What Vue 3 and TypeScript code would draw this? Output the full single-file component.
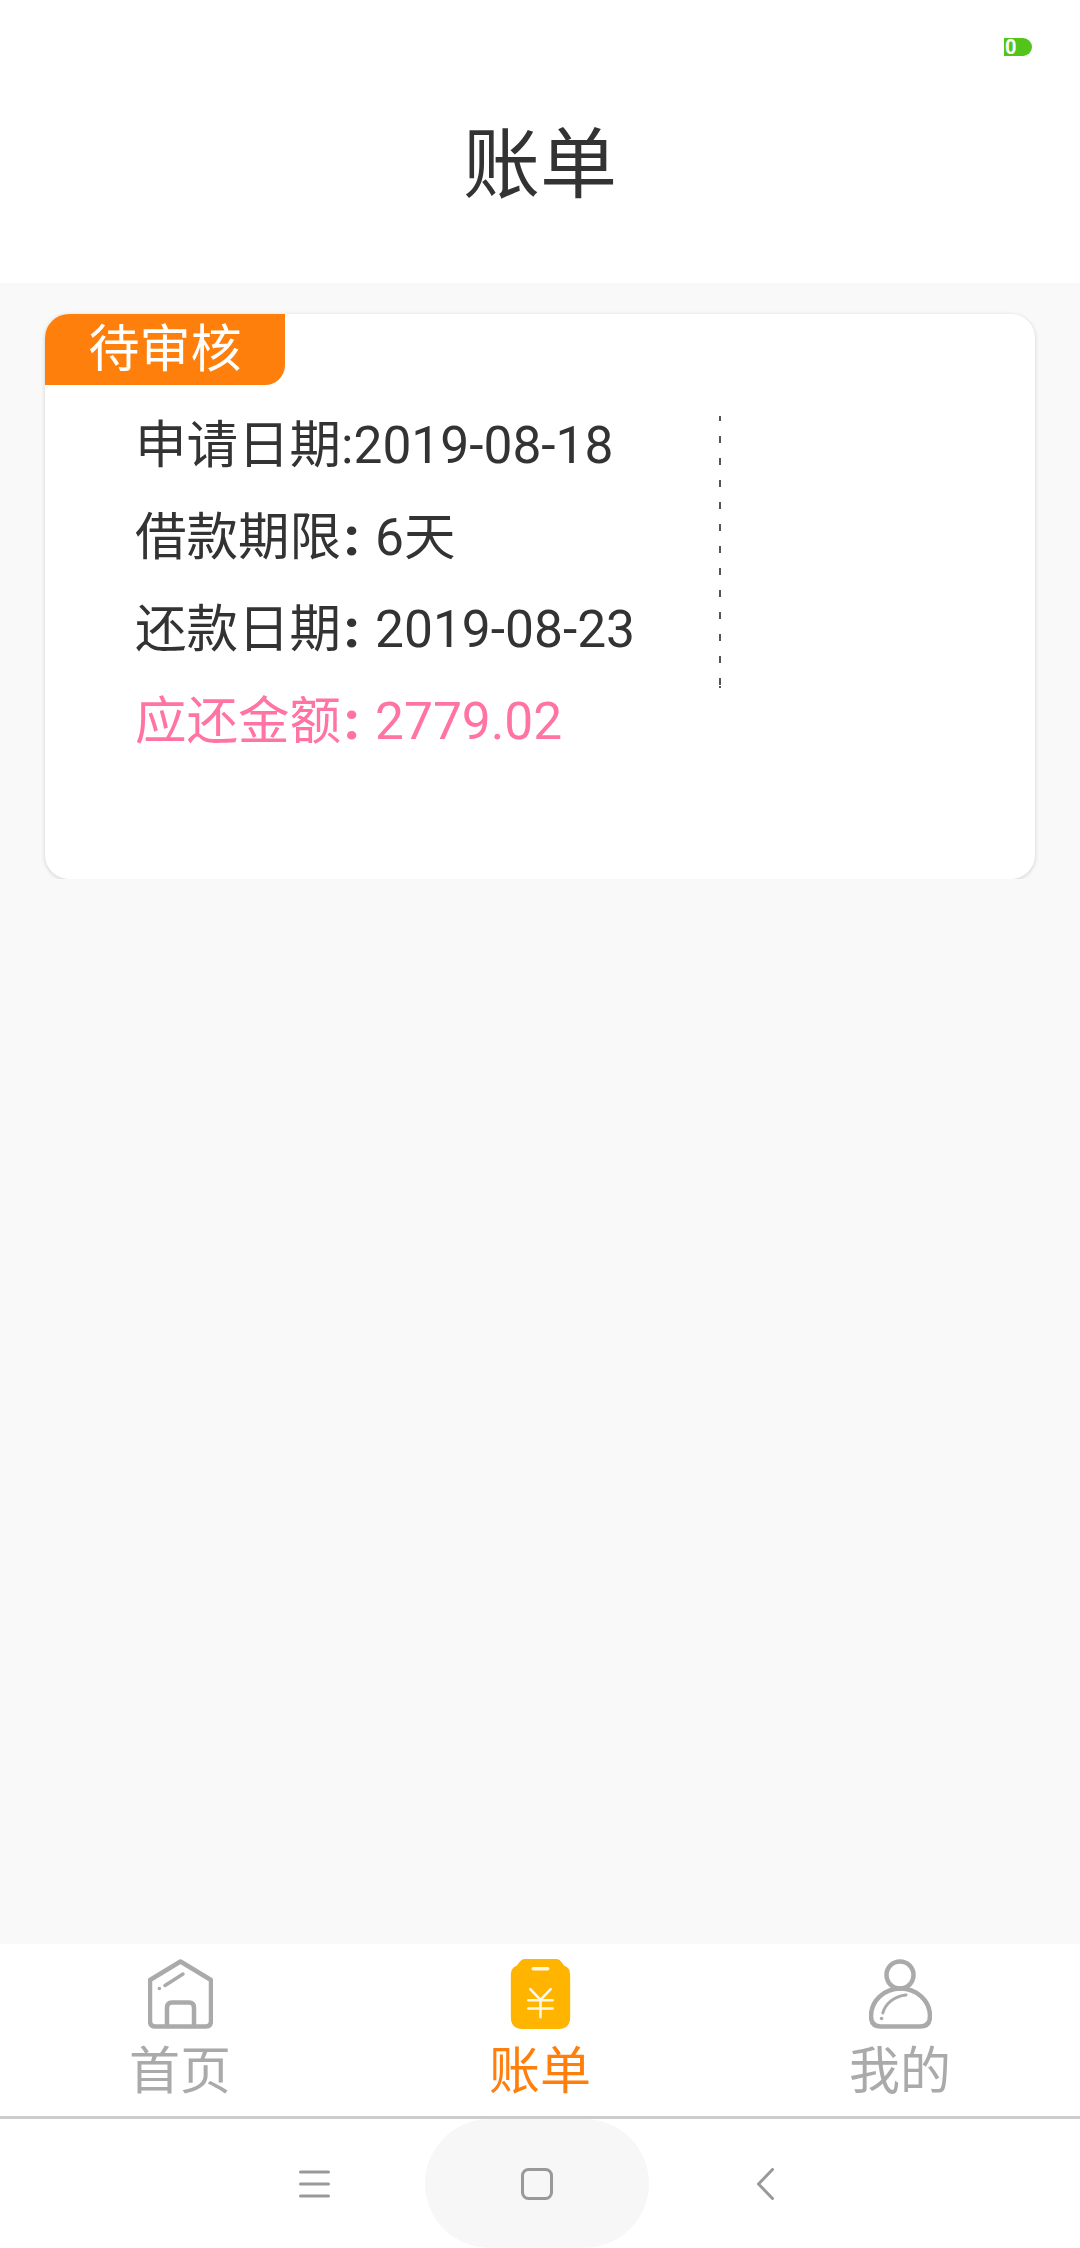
<script setup lang="ts">
interface Tab { label: string; active: boolean; kind: string }
const tabs: Tab[] = [
  { label: '首页', active: false, kind: 'home' },
  { label: '账单', active: true, kind: 'bill' },
  { label: '我的', active: false, kind: 'me' },
]
</script>

<template>
  <div class="phone">
    <header class="header">
      <div class="status">
        <div class="battery"><span class="battery-num">0</span></div>
      </div>
      <h1 class="title">账单</h1>
    </header>

    <main class="content">
      <section class="card">
        <div class="tag">待审核</div>
        <div class="body">
          <div class="info">
            <p class="row">申请日期:2019-08-18</p>
            <p class="row">借款期限<span class="colon">:</span>6天</p>
            <p class="row">还款日期<span class="colon">:</span>2019-08-23</p>
            <p class="row pink">应还金额<span class="colon">:</span>2779.02</p>
          </div>
          <div class="divider"></div>
        </div>
      </section>
    </main>

    <nav class="tabbar">
      <div v-for="t in tabs" :key="t.kind" class="tab" :class="{ active: t.active }">
        <svg v-if="t.kind === 'home'" class="tab-icon" width="65" height="70" viewBox="0 0 65 70" fill="none" stroke="#aaa" stroke-width="4.500" stroke-linecap="round" stroke-linejoin="round">
          <path d="M32.500 2.500 L63 21 V62 Q63 67.500 57.500 67.500 H7.500 Q2 67.500 2 62 V21 Z" />
          <path d="M19 67 V49 Q19 43.500 24 43.500 H41 Q46 43.500 46 49 V67" />
          <path d="M17 26.500 L35 15" stroke-width="3.500" />
          <path d="M11.300 29.500 L11.400 29.500" stroke-width="3.500" />
        </svg>
        <svg v-else-if="t.kind === 'bill'" class="tab-icon" width="61" height="72" viewBox="0 0 61 72">
          <path d="M14 0 H47 Q50 0 52 3 L55 7 Q61 9 61 16 V60 Q61 72 49 72 H12 Q0 72 0 60 V16 Q0 9 6 7 L9 3 Q11 0 14 0 Z" fill="#ffb400" />
          <g fill="none" stroke="#fff" stroke-width="2.600" stroke-linecap="round" opacity="0.9">
            <path d="M23 10 H38" stroke-width="3.500" />
            <path d="M20 31 L30.500 42 L41 31" />
            <path d="M18 42.500 H43" />
            <path d="M18 51 H43" />
            <path d="M30.500 42 V60" />
          </g>
        </svg>
        <svg v-else class="tab-icon" width="63" height="70" viewBox="0 0 63 70" fill="none" stroke="#aaa" stroke-width="4.500" stroke-linecap="round">
          <circle cx="31" cy="16" r="13.500" />
          <path d="M12 67.500 H51 Q61 67.500 61 57 C61 42 48 29.500 31.500 29.500 C15 29.500 2 42 2 57 Q2 67.500 12 67.500 Z" />
          <path d="M37 36 C26 37 16.500 44 13.800 54" stroke-width="3" />
          <path d="M12.500 59.500 L12.600 59.500" stroke-width="3.500" />
        </svg>
        <span class="tab-label">{{ t.label }}</span>
      </div>
    </nav>

    <footer class="sysnav">
      <svg class="sys-icon" width="31" height="28" viewBox="0 0 31 28" stroke="#999" stroke-width="3" stroke-linecap="round">
        <path d="M1.500 2 H29.500 M1.500 14 H29.500 M1.500 26 H29.500" />
      </svg>
      <div class="pill">
        <svg width="32" height="32" viewBox="0 0 32 32" fill="none" stroke="#999" stroke-width="3">
          <rect x="1.500" y="1.500" width="29" height="29" rx="6" />
        </svg>
      </div>
      <svg class="sys-icon" width="17" height="32" viewBox="0 0 17 32" fill="none" stroke="#999" stroke-width="3" stroke-linecap="round" stroke-linejoin="round">
        <path d="M15.500 1.500 L1.500 16 L15.500 30.500" />
      </svg>
    </footer>
  </div>
</template>

<style>
html, body { margin: 0; padding: 0; background: #fff; }
</style>

<style scoped>
.phone {
  width: 1080px;
  height: 2248px;
  display: flex;
  flex-direction: column;
  background: #f9f9f9;
  font-family: Roboto, "Noto Sans CJK SC", "Noto Sans", sans-serif;
  overflow: hidden;
}
.header {
  height: 283px;
  background: #fff;
  display: flex;
  flex-direction: column;
  flex: none;
}
.status {
  height: 130px;
  padding: 38px 48px 0 0;
  box-sizing: border-box;
  display: flex;
  justify-content: flex-end;
}
.battery {
  width: 28px;
  height: 18px;
  background: #52c41a;
  border-radius: 0 9px 9px 0;
  display: flex;
  align-items: center;
  padding-left: 1px;
  box-sizing: border-box;
}
.battery-num {
  color: #fff;
  font-size: 20px;
  font-weight: 700;
  line-height: 18px;
}
.title {
  margin: 0;
  text-align: center;
  font-size: 77px;
  font-weight: 400;
  line-height: 72px;
  color: #333;
}
.content {
  flex: 1;
  padding: 31px 45px 0;
  min-height: 0;
}
.card {
  height: 565px;
  background: #fff;
  border-radius: 24px;
  box-shadow: 0 1px 4px rgba(0, 0, 0, 0.17);
  clip-path: inset(-8px -8px 0 -8px);
}
.tag {
  width: 240px;
  height: 71px;
  background: #ff7f0c;
  color: #fff;
  font-size: 51px;
  line-height: 71px;
  text-align: center;
  border-radius: 24px 0 20px 0;
}
.body {
  display: flex;
  padding: 15px 0 0 90px;
}
.info {
  width: 584px;
  flex: none;
}
.row {
  margin: 0;
  font-size: 51.500px;
  line-height: 92px;
  color: #333;
  white-space: nowrap;
}
.pink { color: #ff74a4; }
.colon {
  display: inline-block;
  width: 34px;
  padding-left: 3px;
  box-sizing: border-box;
  font-weight: 900;
}
.divider {
  width: 2px;
  height: 272px;
  margin-top: 16px;
  background: repeating-linear-gradient(to bottom, #555 0, #555 7px, transparent 7px, transparent 22px);
  background-position: 0 -2px;
}
.tabbar {
  height: 175px;
  flex: none;
  box-sizing: border-box;
  background: #fff;
  display: grid;
  grid-template-columns: repeat(3, 1fr);
  border-bottom: 3px solid #ccc;
}
.tab {
  display: flex;
  flex-direction: column;
  align-items: center;
  padding-top: 15px;
  box-sizing: border-box;
}
.tab-icon { height: 70px; flex: none; filter: blur(0.5px); }
.tab-label {
  margin-top: 15px;
  font-size: 51px;
  line-height: 56px;
  color: #aaa;
}
.tab.active .tab-label { color: #ff7f0c; }
.sysnav {
  height: 129px;
  flex: none;
  background: #fff;
  display: flex;
  align-items: center;
  justify-content: center;
  padding-right: 7px;
  box-sizing: border-box;
}
.sysnav .sys-icon:first-child { margin-right: 95px; }
.sysnav .sys-icon:last-child { margin-left: 108px; }
.pill {
  width: 224px;
  height: 129px;
  border-radius: 65px;
  background: #f7f7f7;
  display: flex;
  align-items: center;
  justify-content: center;
}
</style>
